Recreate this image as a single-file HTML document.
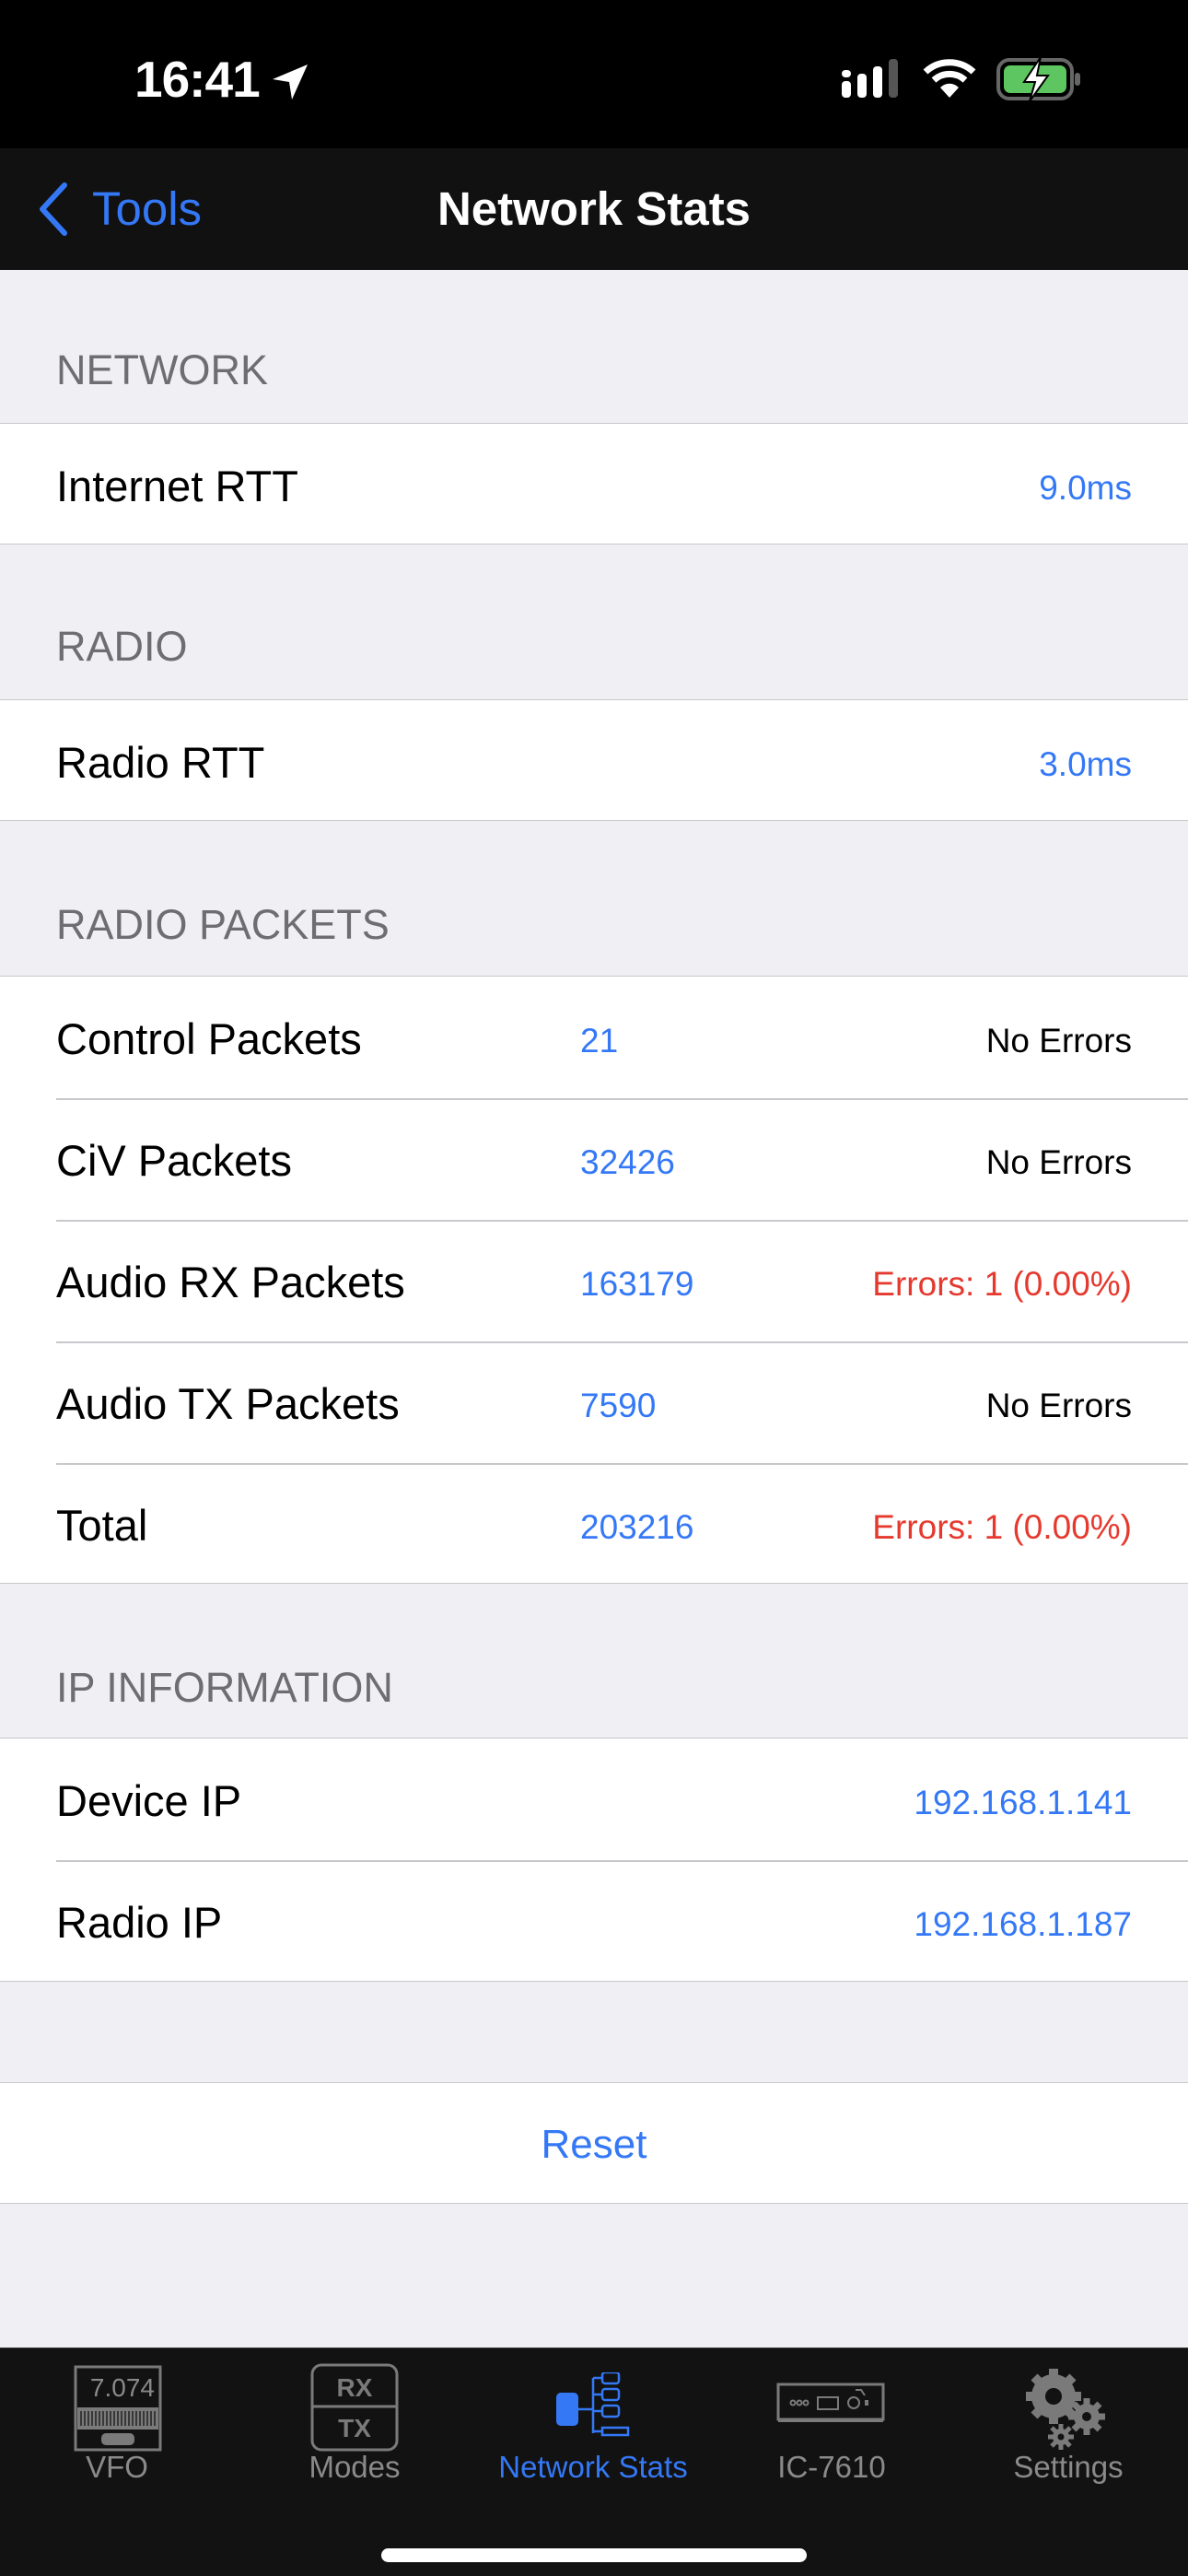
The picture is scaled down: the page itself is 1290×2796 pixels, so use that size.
<!DOCTYPE html>
<html><head><meta charset="utf-8"><style>
*{margin:0;padding:0;box-sizing:border-box}
body{width:1290px;height:2796px;background:#efeff4;font-family:"Liberation Sans",sans-serif;position:relative;overflow:hidden}
.abs{position:absolute}
.status{left:0;top:0;width:1290px;height:161px;background:#000}
.nav{left:0;top:161px;width:1290px;height:132px;background:#111}
.hdr{left:61px;font-size:45px;color:#6d6d72}
.row{left:0;width:1290px;height:132px;background:#fff;border-top:1.5px solid #c8c7cc;border-bottom:1.5px solid #c8c7cc}
.lbl{position:absolute;left:61px;top:0;line-height:136px;font-size:47px;color:#000}
.val{position:absolute;right:61px;top:0;line-height:140px;font-size:37px;color:#3478f6}
.mid{position:absolute;left:630px;top:0;line-height:140px;font-size:37px;color:#3478f6}
.sep{position:absolute;left:61px;right:0;bottom:-1.5px;height:1.5px;background:#c8c7cc}
.red{color:#e5392e}.blk{color:#000}
.tab{top:2548px;left:0;width:1290px;height:248px;background:#121212;border-top:1px solid #333}
.tl{position:absolute;font-size:33px;color:#8a8a8a;text-align:center;width:260px}
</style></head><body>
<div class="abs status">
 <div class="abs" style="left:146px;top:54px;font-size:55px;font-weight:bold;color:#fff;letter-spacing:-1px">16:41</div>
 <svg class="abs" style="left:292px;top:66px" width="46" height="46" viewBox="0 0 46 46"><path d="M42 4 L4 20 L22 23 L25 42 Z" fill="#fff"/></svg>
 <svg class="abs" style="left:912px;top:62px" width="66" height="46"><rect x="2" y="26" width="10" height="18" rx="4" fill="#fff"/><rect x="19" y="18" width="10" height="26" rx="4" fill="#fff"/><rect x="36" y="10" width="10" height="34" rx="4" fill="#fff"/><rect x="53" y="2" width="10" height="42" rx="4" fill="#555"/><rect x="2" y="14" width="10" height="8" rx="4" fill="#fff"/></svg>
 <svg class="abs" style="left:1002px;top:62px" width="58" height="46" viewBox="0 0 58 46"><path d="M3 16 A38 38 0 0 1 55 16" stroke="#fff" stroke-width="7" fill="none"/><path d="M12 25 A25 25 0 0 1 46 25" stroke="#fff" stroke-width="7" fill="none"/><path d="M29 44 L19 33 A14 14 0 0 1 39 33 Z" fill="#fff"/></svg>
 <svg class="abs" style="left:1082px;top:62px" width="94" height="48" viewBox="0 0 94 48"><rect x="2" y="3" width="80" height="42" rx="12" fill="none" stroke="#666" stroke-width="4"/><rect x="8" y="9" width="68" height="30" rx="7" fill="#5dc660"/><rect x="85" y="17" width="6" height="14" rx="3" fill="#666"/><path d="M48 0 L30 27 L42 27 L36 48 L56 20 L44 20 Z" fill="#fff" stroke="#000" stroke-width="2"/></svg>
</div>
<div class="abs nav">
 <svg class="abs" style="left:38px;top:36px" width="36" height="60"><path d="M32 4 L8 30 L32 56" stroke="#3478f6" stroke-width="6" fill="none" stroke-linecap="round" stroke-linejoin="round"/></svg>
 <div class="abs" style="left:100px;top:36px;font-size:51px;color:#3478f6">Tools</div>
 <div class="abs" style="left:0;width:1290px;text-align:center;top:36px;font-size:51px;font-weight:bold;color:#fff">Network Stats</div>
</div>

<div class="abs hdr" style="top:376px">NETWORK</div>
<div class="abs row" style="top:459px"><div class="lbl">Internet RTT</div><div class="val">9.0ms</div></div>
<div class="abs hdr" style="top:676px">RADIO</div>
<div class="abs row" style="top:759px"><div class="lbl">Radio RTT</div><div class="val">3.0ms</div></div>
<div class="abs hdr" style="top:978px">RADIO PACKETS</div>
<div class="abs row" style="top:1059px;height:660px;">
 <div style="position:relative;height:132px"><div class="lbl">Control Packets</div><div class="mid">21</div><div class="val blk">No Errors</div><div class="sep"></div></div>
 <div style="position:relative;height:132px"><div class="lbl">CiV Packets</div><div class="mid">32426</div><div class="val blk">No Errors</div><div class="sep"></div></div>
 <div style="position:relative;height:132px"><div class="lbl">Audio RX Packets</div><div class="mid">163179</div><div class="val red">Errors: 1 (0.00%)</div><div class="sep"></div></div>
 <div style="position:relative;height:132px"><div class="lbl">Audio TX Packets</div><div class="mid">7590</div><div class="val blk">No Errors</div><div class="sep"></div></div>
 <div style="position:relative;height:130px"><div class="lbl">Total</div><div class="mid">203216</div><div class="val red">Errors: 1 (0.00%)</div></div>
</div>
<div class="abs hdr" style="top:1806px">IP INFORMATION</div>
<div class="abs row" style="top:1886px;height:265px">
 <div style="position:relative;height:132px"><div class="lbl">Device IP</div><div class="val">192.168.1.141</div><div class="sep"></div></div>
 <div style="position:relative;height:130px"><div class="lbl">Radio IP</div><div class="val">192.168.1.187</div></div>
</div>
<div class="abs row" style="top:2260px"><div style="text-align:center;line-height:134px;font-size:44px;color:#3478f6">Reset</div></div>

<div class="abs tab">
 <svg class="abs" style="left:80px;top:18px" width="96" height="94"><rect x="2" y="2" width="92" height="90" fill="none" stroke="#7a7a7a" stroke-width="3"/><text x="88" y="34" font-size="28" fill="#8a8a8a" text-anchor="end" font-family="Liberation Sans">7.074</text><rect x="4" y="46" width="88" height="24" fill="#7a7a7a"/><g stroke="#222" stroke-width="1.5"><path d="M8 50v16M12 50v16M16 50v16M20 50v16M24 50v16M28 50v16M32 50v16M36 50v16M40 50v16M44 50v16M48 50v16M52 50v16M56 50v16M60 50v16M64 50v16M68 50v16M72 50v16M76 50v16M80 50v16M84 50v16M88 50v16"/></g><rect x="30" y="74" width="36" height="13" rx="5" fill="#7a7a7a"/></svg>
 <svg class="abs" style="left:337px;top:16px" width="96" height="96"><rect x="2" y="2" width="92" height="92" rx="10" fill="none" stroke="#7a7a7a" stroke-width="3"/><line x1="2" y1="47" x2="94" y2="47" stroke="#7a7a7a" stroke-width="3"/><text x="48" y="36" font-size="28" font-weight="bold" fill="#7a7a7a" text-anchor="middle" font-family="Liberation Sans">RX</text><text x="48" y="80" font-size="28" font-weight="bold" fill="#7a7a7a" text-anchor="middle" font-family="Liberation Sans">TX</text></svg>
 <svg class="abs" style="left:600px;top:26px" width="88" height="70"><rect x="4" y="22" width="24" height="36" rx="5" fill="#3478f6"/><g stroke="#3478f6" stroke-width="2.5" fill="none"><path d="M28 40h16M44 6v60M44 6h10M44 24h10M44 42h10M44 64h10"/><rect x="54" y="0" width="18" height="12" rx="3"/><rect x="54" y="18" width="18" height="12" rx="3"/><rect x="54" y="36" width="18" height="12" rx="3"/><rect x="54" y="60" width="28" height="8"/></g></svg>
 <svg class="abs" style="left:843px;top:37px" width="118" height="44"><rect x="2" y="2" width="114" height="38" fill="none" stroke="#7a7a7a" stroke-width="3"/><line x1="2" y1="42" x2="116" y2="42" stroke="#7a7a7a" stroke-width="2"/><g fill="none" stroke="#7a7a7a" stroke-width="2"><circle cx="18" cy="22" r="2.5"/><circle cx="25" cy="22" r="2.5"/><circle cx="32" cy="22" r="2.5"/><rect x="45" y="16" width="22" height="13"/><circle cx="84" cy="22" r="6"/><path d="M86 8h6l4 6"/></g><rect x="96" y="19" width="4" height="6" fill="#7a7a7a"/></svg>
 <svg class="abs" style="left:1110px;top:18px" width="100" height="96" viewBox="0 0 100 96"><g fill="#7a7a7a"><circle cx="34" cy="34" r="24"/><g stroke="#7a7a7a" stroke-width="10"><path d="M34 4v60M4 34h60M13 13l42 42M55 13l-42 42"/></g><circle cx="34" cy="34" r="9" fill="#121212"/><circle cx="70" cy="56" r="14"/><g stroke="#7a7a7a" stroke-width="7"><path d="M70 36v40M50 56h40M56 42l28 28M84 42l-28 28"/></g><circle cx="70" cy="56" r="5" fill="#121212"/><circle cx="42" cy="78" r="9"/><g stroke="#7a7a7a" stroke-width="5"><path d="M42 64v28M28 78h28M32 68l20 20M52 68l-20 20"/></g><circle cx="42" cy="78" r="3.5" fill="#121212"/></g></svg>
 <div class="tl" style="left:-3px;top:110px">VFO</div>
 <div class="tl" style="left:255px;top:110px">Modes</div>
 <div class="tl" style="left:514px;top:110px;color:#3478f6">Network Stats</div>
 <div class="tl" style="left:773px;top:110px">IC-7610</div>
 <div class="tl" style="left:1030px;top:110px">Settings</div>
 <div class="abs" style="left:414px;top:217px;width:462px;height:15px;border-radius:8px;background:#fff"></div>
</div>
</body></html>
